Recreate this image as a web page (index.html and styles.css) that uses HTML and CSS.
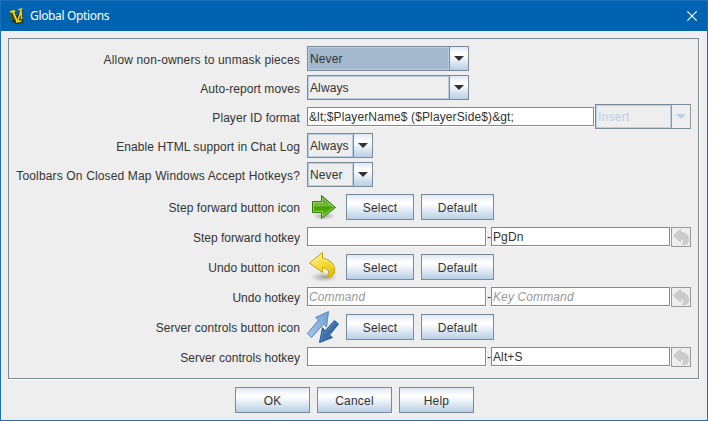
FILE: index.html
```html
<!DOCTYPE html>
<html lang="en">
<head>
<meta charset="utf-8">
<title>Global Options</title>
<link rel="stylesheet" href="styles.css">
</head>
<body>
<svg class="defs" width="0" height="0" aria-hidden="true">
  <defs>
    <linearGradient id="green" x1="0" y1="0" x2="0" y2="1"><stop offset="0" stop-color="#4c9a1c"/><stop offset=".45" stop-color="#78bd3c"/><stop offset=".5" stop-color="#45a000"/><stop offset="1" stop-color="#66c914"/></linearGradient>
    <linearGradient id="gold" x1="0" y1="0" x2="1" y2="1"><stop offset="0" stop-color="#fff09a"/><stop offset=".55" stop-color="#f5d92e"/><stop offset="1" stop-color="#d9b90a"/></linearGradient>
    <linearGradient id="sky" x1="1" y1="0" x2="0" y2="1"><stop offset="0" stop-color="#6f9fd3"/><stop offset="1" stop-color="#a6c8eb"/></linearGradient>
    <radialGradient id="shade"><stop offset="0" stop-color="#777" stop-opacity=".6"/><stop offset="1" stop-color="#777" stop-opacity="0"/></radialGradient>
    <symbol id="undo" viewBox="0 0 18 18"><path d="M1.5 7.5 8.5 1.5V4.5C13 4.5 16.5 7 16.5 11.5C16.5 14 15.5 16 13.5 16.5H10.5C12.5 14.5 12 11 8.5 10.5V14Z" fill="#ccc" stroke="#c0c0c0" stroke-width=".8"/></symbol>
  </defs>
</svg>
<div class="window">
  <header class="titlebar">
    <svg class="logo" width="16" height="16" viewBox="0 0 16 16"><ellipse cx="4" cy="9" rx="3.8" ry="3.6" fill="#35583c"/><ellipse cx="11.5" cy="9.5" rx="3.6" ry="5.5" fill="#2c5050"/><path d="M2 12 14 11.5 14.5 15 8 16 4 14.5Z" fill="#22382b"/><path d="M3.5 4 8.5 12.5 12.3 2" fill="none" stroke="#18251d" stroke-width="3.2"/><path d="M1 3.9 6 3M3.8 3.5 8.3 13.5" fill="none" stroke="#ffdc00" stroke-width="1.9"/><path d="M8.6 14 12 2 12.6 11" fill="none" stroke="#f5cf00" stroke-width="1.5"/><path d="M9.3 1.8 13.3.7M7 14 12.5 13" stroke="#ffdc00" stroke-width="1.4"/></svg>
    <h1 class="title">Global Options</h1>
    <svg class="close" width="10" height="10" viewBox="0 0 10 10"><path d="M.3.3 9.7 9.7M9.7.3.3 9.7" stroke="#fff" stroke-width="1.1"/></svg>
  </header>
  <main class="content">
    <section class="panel">
      <label class="label l-loose">Allow non-owners to unmask pieces</label>
      <div class="combo wide focused"><span class="value">Never</span><span class="drop"></span></div>

      <label class="label">Auto-report moves</label>
      <div class="combo wide"><span class="value">Always</span><span class="drop"></span></div>

      <label class="label">Player ID format</label>
      <div class="row"><div class="field grow">&amp;lt;$PlayerName$ ($PlayerSide$)&amp;gt;</div><div class="combo insert disabled"><span class="value">Insert</span><span class="drop"></span></div></div>

      <label class="label l-medium">Enable HTML support in Chat Log</label>
      <div class="combo narrow"><span class="value">Always</span><span class="drop"></span></div>

      <label class="label l-loose">Toolbars On Closed Map Windows Accept Hotkeys?</label>
      <div class="combo narrow"><span class="value">Never</span><span class="drop"></span></div>

      <label class="label">Step forward button icon</label>
      <div class="row">
        <svg class="icon" width="32" height="32" viewBox="0 0 32 32"><ellipse cx="17" cy="25" rx="12" ry="4" fill="url(#shade)"/><path d="M5.5 10.5H14.5V4.5L28.5 16.5 14.5 27.5V21.5H5.5Z" fill="url(#green)" stroke="#2f7a0c"/><path d="M6.5 11.5H15.5V6.8L26.8 16.5 15.5 25.5V20.5H6.5Z" fill="none" stroke="#a5dc76" stroke-width=".8"/></svg>
        <button class="button select">Select</button><button class="button default">Default</button>
      </div>

      <label class="label l-tight">Step forward hotkey</label>
      <div class="row"><div class="field key"></div><span class="dash">-</span><div class="field key">PgDn</div><div class="reset"><svg width="18" height="18"><use href="#undo"/></svg></div></div>

      <label class="label">Undo button icon</label>
      <div class="row">
        <svg class="icon" width="32" height="32" viewBox="0 0 32 32"><ellipse cx="17" cy="26" rx="14" ry="5" fill="url(#shade)"/><path d="M2.5 12 15.5 1.5V7.5C23 8 29 14 27.5 21C26.5 24.5 23.5 27 18.5 26.5C22.5 24.5 24 18 15.5 16.5V21.5Z" fill="url(#gold)" stroke="#c3a000" stroke-linejoin="round"/><path d="M4.3 12 14.5 3.7V8.5C20 8.5 25 12 26.5 17" fill="none" stroke="#fff6b2" stroke-width=".9"/></svg>
        <button class="button select">Select</button><button class="button default">Default</button>
      </div>

      <label class="label l-tight">Undo hotkey</label>
      <div class="row"><div class="field key hint">Command</div><span class="dash">-</span><div class="field key hint">Key Command</div><div class="reset"><svg width="18" height="18"><use href="#undo"/></svg></div></div>

      <label class="label">Server controls button icon</label>
      <div class="row">
        <svg class="icon" width="32" height="32" viewBox="0 0 32 32"><path d="M21.5.5 8.5 6.5 11.5 9 .5 22.5 4.5 26.5 16.5 13 19.5 16Z" fill="url(#sky)" stroke="#5c87ba" stroke-linejoin="round"/><path d="M27.5 9.5 31.5 13 22.5 24 25.5 26.5 12.5 31.5 15.5 16.5 18 20Z" fill="#3b71aa" stroke="#28588e" stroke-linejoin="round"/><path d="M27.5 11 18 22.5 16 20 14 30" fill="none" stroke="#6593c4" stroke-width=".8"/></svg>
        <button class="button select">Select</button><button class="button default">Default</button>
      </div>

      <label class="label l-tight">Server controls hotkey</label>
      <div class="row"><div class="field key"></div><span class="dash">-</span><div class="field key">Alt+S</div><div class="reset"><svg width="18" height="18"><use href="#undo"/></svg></div></div>
    </section>
    <footer class="actions">
      <button class="button">OK</button><button class="button">Cancel</button><button class="button">Help</button>
    </footer>
  </main>
</div>
</body>
</html>
```
FILE: styles.css
```css
* { box-sizing: border-box; }
body { margin: 0; font: 12px/14px "Liberation Sans", Arial, sans-serif; letter-spacing: .12px; color: #333; }
.defs { display: block; height: 0; }
.window { width: 708px; height: 421px; border: 1px solid #1a6fb8; background: #eee; }
.titlebar { height: 30px; display: flex; align-items: center; padding: 0 9px 0 8px; background: #0063b1; color: #fff; }
.logo { margin-right: 5px; margin-bottom: 1px; }
.title { flex: 1; margin: 0; font: 12px/18px "Noto Sans", "Open Sans", sans-serif; letter-spacing: -.35px; }
.close { display: block; margin-right: 1px; }
.content { padding: 7px 8px 0 7px; }
.panel { width: 691px; height: 341px; border: 1px solid #7a8a99; box-shadow: 1px 1px #fff; padding: 7px 7px 0 6px; display: grid; grid-template-columns: 285px 384px; column-gap: 7px; row-gap: 4px; align-items: center; align-content: start; }
.label { justify-self: end; white-space: nowrap; padding-top: 2px; letter-spacing: .06px; }
.l-loose { letter-spacing: .15px; }
.l-medium { letter-spacing: .09px; }
.l-tight { letter-spacing: .02px; }
.row { display: flex; align-items: center; }
.combo { height: 25px; display: flex; border: 1px solid #7a8a99; }
.wide { width: 162px; }
.narrow { width: 66px; }
.insert { width: 96px; flex: none; }
.value { flex: 1; border: 1px solid #b8cfe5; line-height: 22px; padding-left: 1px; white-space: nowrap; }
.drop { width: 19px; border-left: 1px solid #7a8a99; display: flex; align-items: center; justify-content: center; background: linear-gradient(#dfe9f3 0, #fff 30%, #fff 35%, #b8cfe5 100%); }
.drop::after { content: ""; border: 5px solid transparent; border-top-color: #333; border-bottom: 0; margin-bottom: 1px; }
.focused .value { background: #a3b8cc; }
.disabled { color: #b8cfe5; border-right-color: #999; }
.disabled .value { letter-spacing: .25px; }
.disabled .drop { background: none; border-left-color: #999; }
.disabled .drop::after { border-top-color: #b8cfe5; }
.field { height: 19px; margin: 0 1px 1px 0; border: 1px solid #7a8a99; box-shadow: 1px 1px #fff; background: #fff; line-height: 18px; padding-left: 1px; white-space: nowrap; }
.grow { flex: 1; }
.key { width: 179px; }
.hint { color: #999; font-style: italic; letter-spacing: .12px; }
.dash { width: 4px; }
.reset { width: 20px; height: 20px; border: 1px solid #999; }
.reset svg { display: block; }
.icon { display: block; }
.button { height: 26px; width: 75px; padding: 1px 0 0; border: 1px solid #7a8a99; border-radius: 0; background: linear-gradient(#dde8f3 0, #fff 30%, #fff 36%, #b8cfe5 100%); color: #333; font: inherit; letter-spacing: .2px; }
.select { width: 68px; margin: 0 7px; }
.default { width: 73px; }
.actions { display: flex; gap: 7px; padding: 8px 0 0 227px; }
```
